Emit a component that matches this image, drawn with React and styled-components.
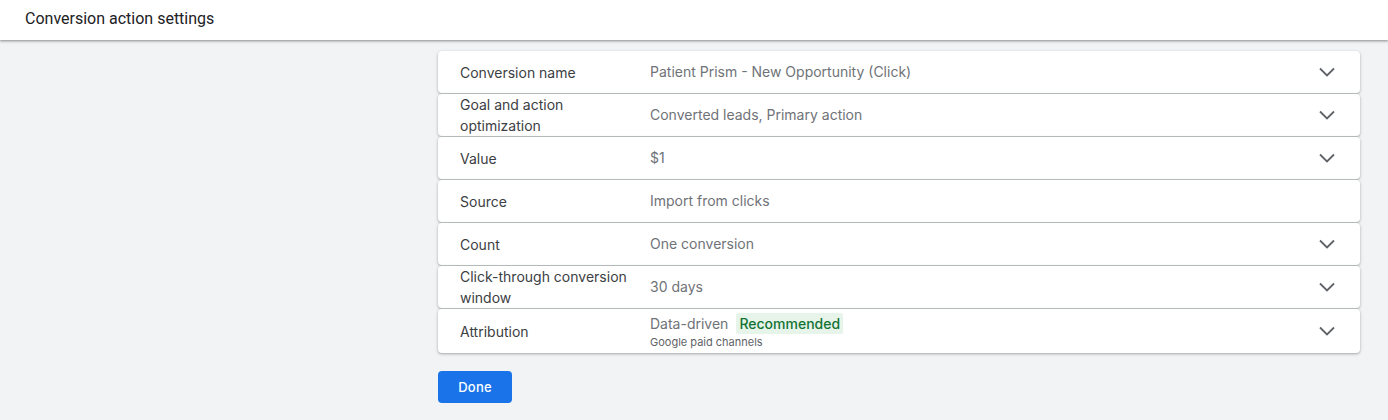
import React from "react";
import styled, { createGlobalStyle } from "styled-components";

const GlobalStyle = createGlobalStyle`
  html, body {
    margin: 0;
    padding: 0;
    background: #f1f3f4;
    font-family: Inter, Roboto, "Liberation Sans", Arial, sans-serif;
  }
`;

const Page = styled.div`
  min-height: 420px;
  background: #f1f3f4;
`;

const Header = styled.header`
  height: 40px;
  background: #fff;
  display: flex;
  align-items: center;
  padding-left: 25px;
  box-shadow: 0 1px 2px rgba(60, 64, 67, 0.45), 0 1px 3px 1px rgba(60, 64, 67, 0.12);
  position: relative;
  z-index: 1;
`;

const HeaderTitle = styled.h1`
  margin: 0 0 3px;
  font-family: Roboto, "Liberation Sans", Arial, sans-serif;
  font-size: 16px;
  font-weight: 400;
  color: #202124;
`;

const Main = styled.main`
  padding: 11px 28px 0 438px;
`;

const Panels = styled.div`
  display: flex;
  flex-direction: column;
  gap: 1px;
`;

const Panel = styled.div`
  background: #fff;
  border-radius: 4px;
  min-height: ${(p) => (p.$tall ? "44px" : "42px")};
  display: flex;
  align-items: center;
  padding-left: 22px;
  padding-right: 21px;
  box-shadow: 0 1px 2px rgba(60, 64, 67, 0.3), 0 1px 3px 1px rgba(60, 64, 67, 0.1);
`;

const Label = styled.div`
  width: 180px;
  padding-right: 10px;
  font-size: 14px;
  line-height: 21px;
  color: #3c4043;
`;

const Value = styled.div`
  flex: 1;
  font-size: 14px;
  line-height: 20px;
  color: #6f7378;
  display: flex;
  flex-direction: column;
  justify-content: center;
`;

const ValueLine = styled.div`
  display: flex;
  align-items: center;
  gap: 8px;
`;

const Badge = styled.span`
  background: #e6f4ea;
  color: #137333;
  font-weight: 500;
  padding: 0 3px;
  line-height: 21px;
  border-radius: 2px;
`;

const SubText = styled.div`
  font-size: 11px;
  line-height: 14px;
  color: #5f6368;
  margin-top: 1px;
`;

const IconBox = styled.div`
  width: 24px;
  height: 24px;
  display: flex;
  align-items: center;
  justify-content: center;
  visibility: ${(p) => (p.$hidden ? "hidden" : "visible")};
`;

const DoneButton = styled.button`
  margin-top: 18px;
  width: 74px;
  height: 32px;
  border: none;
  border-radius: 4px;
  background: #1a73e8;
  color: #fff;
  font-family: Inter, Roboto, "Liberation Sans", Arial, sans-serif;
  font-size: 13px;
  font-weight: 500;
  letter-spacing: 0.2px;
  cursor: pointer;
`;

const Chevron = () => (
  <svg width="24" height="24" viewBox="0 0 24 24">
    <path d="M5 8.5 12 15.5 19 8.5" fill="none" stroke="#5f6368" strokeWidth="1.8" />
  </svg>
);

const rows = [
  { id: 1, label: "Conversion name", value: "Patient Prism - New Opportunity (Click)" },
  { id: 2, label: "Goal and action optimization", value: "Converted leads, Primary action" },
  { id: 3, label: "Value", value: "$1" },
  { id: 4, label: "Source", value: "Import from clicks", noExpand: true },
  { id: 5, label: "Count", value: "One conversion" },
  { id: 6, label: "Click-through conversion window", value: "30 days" },
  {
    id: 7,
    label: "Attribution",
    value: "Data-driven",
    badge: "Recommended",
    sub: "Google paid channels",
  },
];

const App = () => {
  return (
    <>
      <GlobalStyle />
      <Page>
        <Header>
          <HeaderTitle>Conversion action settings</HeaderTitle>
        </Header>
        <Main>
          <Panels>
            {rows.map((item) => (
              <Panel key={item.id} $tall={!!item.sub}>
                <Label>{item.label}</Label>
                <Value>
                  <ValueLine>
                    {item.value}
                    {item.badge && <Badge>{item.badge}</Badge>}
                  </ValueLine>
                  {item.sub && <SubText>{item.sub}</SubText>}
                </Value>
                <IconBox $hidden={item.noExpand}>
                  <Chevron />
                </IconBox>
              </Panel>
            ))}
          </Panels>
          <DoneButton>Done</DoneButton>
        </Main>
      </Page>
    </>
  );
};

export default App;
